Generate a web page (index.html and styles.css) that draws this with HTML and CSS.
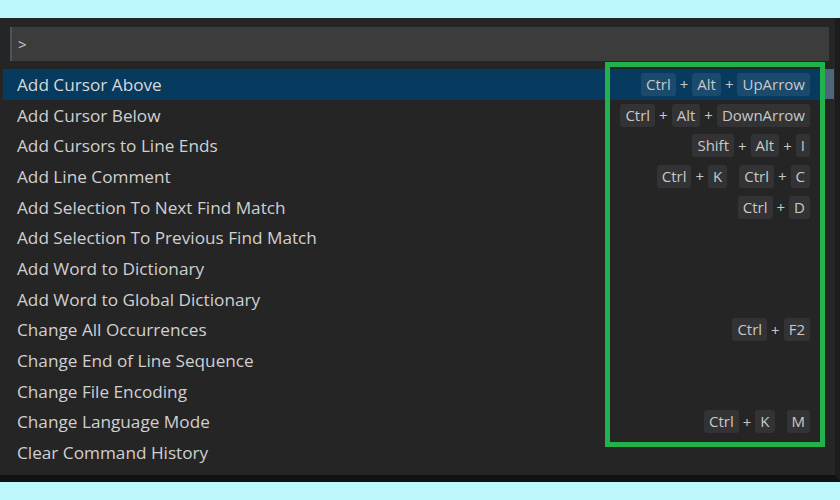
FILE: index.html
```html
<!DOCTYPE html>
<html lang="en">
  <head>
    <meta charset="UTF-8" />
    <meta name="viewport" content="width=device-width, initial-scale=1.0" />
    <title>Command Palette</title>
    <link rel="stylesheet" href="styles.css">
  </head>

  <body>
    <div id="palette">
      <div class="palette_input">
        <span class="prompt">&gt;</span>
      </div>
      <div class="palette_body">
        <ul class="palette_list">
          <li class="palette_row selected">
            <span class="label">Add Cursor Above</span>
            <span class="keys"><kbd>Ctrl</kbd>+<kbd>Alt</kbd>+<kbd>UpArrow</kbd></span>
          </li>
          <li class="palette_row">
            <span class="label">Add Cursor Below</span>
            <span class="keys"><kbd>Ctrl</kbd>+<kbd>Alt</kbd>+<kbd>DownArrow</kbd></span>
          </li>
          <li class="palette_row">
            <span class="label">Add Cursors to Line Ends</span>
            <span class="keys"><kbd>Shift</kbd>+<kbd>Alt</kbd>+<kbd>I</kbd></span>
          </li>
          <li class="palette_row">
            <span class="label">Add Line Comment</span>
            <span class="keys"><kbd>Ctrl</kbd>+<kbd>K</kbd><i class="chord"></i><kbd>Ctrl</kbd>+<kbd>C</kbd></span>
          </li>
          <li class="palette_row">
            <span class="label">Add Selection To Next Find Match</span>
            <span class="keys"><kbd>Ctrl</kbd>+<kbd>D</kbd></span>
          </li>
          <li class="palette_row">
            <span class="label">Add Selection To Previous Find Match</span>
          </li>
          <li class="palette_row">
            <span class="label">Add Word to Dictionary</span>
          </li>
          <li class="palette_row">
            <span class="label">Add Word to Global Dictionary</span>
          </li>
          <li class="palette_row">
            <span class="label">Change All Occurrences</span>
            <span class="keys"><kbd>Ctrl</kbd>+<kbd>F2</kbd></span>
          </li>
          <li class="palette_row">
            <span class="label">Change End of Line Sequence</span>
          </li>
          <li class="palette_row">
            <span class="label">Change File Encoding</span>
          </li>
          <li class="palette_row">
            <span class="label">Change Language Mode</span>
            <span class="keys"><kbd>Ctrl</kbd>+<kbd>K</kbd><i class="chord"></i><kbd>M</kbd></span>
          </li>
          <li class="palette_row">
            <span class="label">Clear Command History</span>
          </li>
        </ul>
        <div class="scrollbar">
          <div class="scrollbar_thumb"></div>
        </div>
      </div>
      <div class="highlight_box"></div>
    </div>
  </body>
</html>
```

FILE: styles.css
```css
body {
  margin: 0;
  background-color: #bcf8fb;
  font-family: "Open Sans", "Noto Sans", sans-serif;
}

#palette {
  position: relative;
  margin-top: 18px;
  height: 448px;
  overflow: hidden;
  background-color: #252526;
  border-bottom: 7px solid #111112;
  border-right: 5px solid #1c1c1d;
  padding: 9px 0 0 0;
}

#palette .palette_input {
  margin: 0 6px 0 10px;
  height: 34px;
  background-color: #3c3c3c;
  border-left: 2px solid #4a5560;
  display: flex;
  align-items: center;
  padding-left: 6px;
  color: #cccccc;
  font-size: 15px;
}

#palette .palette_body {
  display: flex;
  margin-top: 8px;
  margin-left: 3px;
}

#palette .palette_list {
  list-style: none;
  margin: 0;
  padding: 0;
  width: 821px;
  flex: none;
}

#palette .palette_row {
  height: 30.7px;
  display: flex;
  align-items: center;
  justify-content: space-between;
  padding: 0 14px 0 14px;
  color: #d0d0d0;
  font-size: 17.2px;
}

#palette .palette_row.selected {
  background-color: #063a5e;
  color: #d8d8d8;
}

#palette .keys {
  display: flex;
  align-items: center;
  gap: 4px;
  font-size: 15px;
  color: #c8c8c8;
}

#palette .keys kbd {
  font-family: inherit;
  height: 23px;
  line-height: 23px;
  padding: 0 5px;
  border-radius: 3px;
  background-color: #333335;
  color: #c8c8c8;
}

#palette .palette_row.selected .keys kbd {
  background-color: #1b4a6d;
}

#palette .keys .chord {
  width: 4px;
}

#palette .scrollbar {
  width: 10px;
  flex: none;
}

#palette .scrollbar_thumb {
  height: 30px;
  background-color: #4f6579;
}

#palette .highlight_box {
  position: absolute;
  left: 605px;
  top: 44px;
  width: 210px;
  height: 375px;
  border: 5px solid #22b24c;
}
```
